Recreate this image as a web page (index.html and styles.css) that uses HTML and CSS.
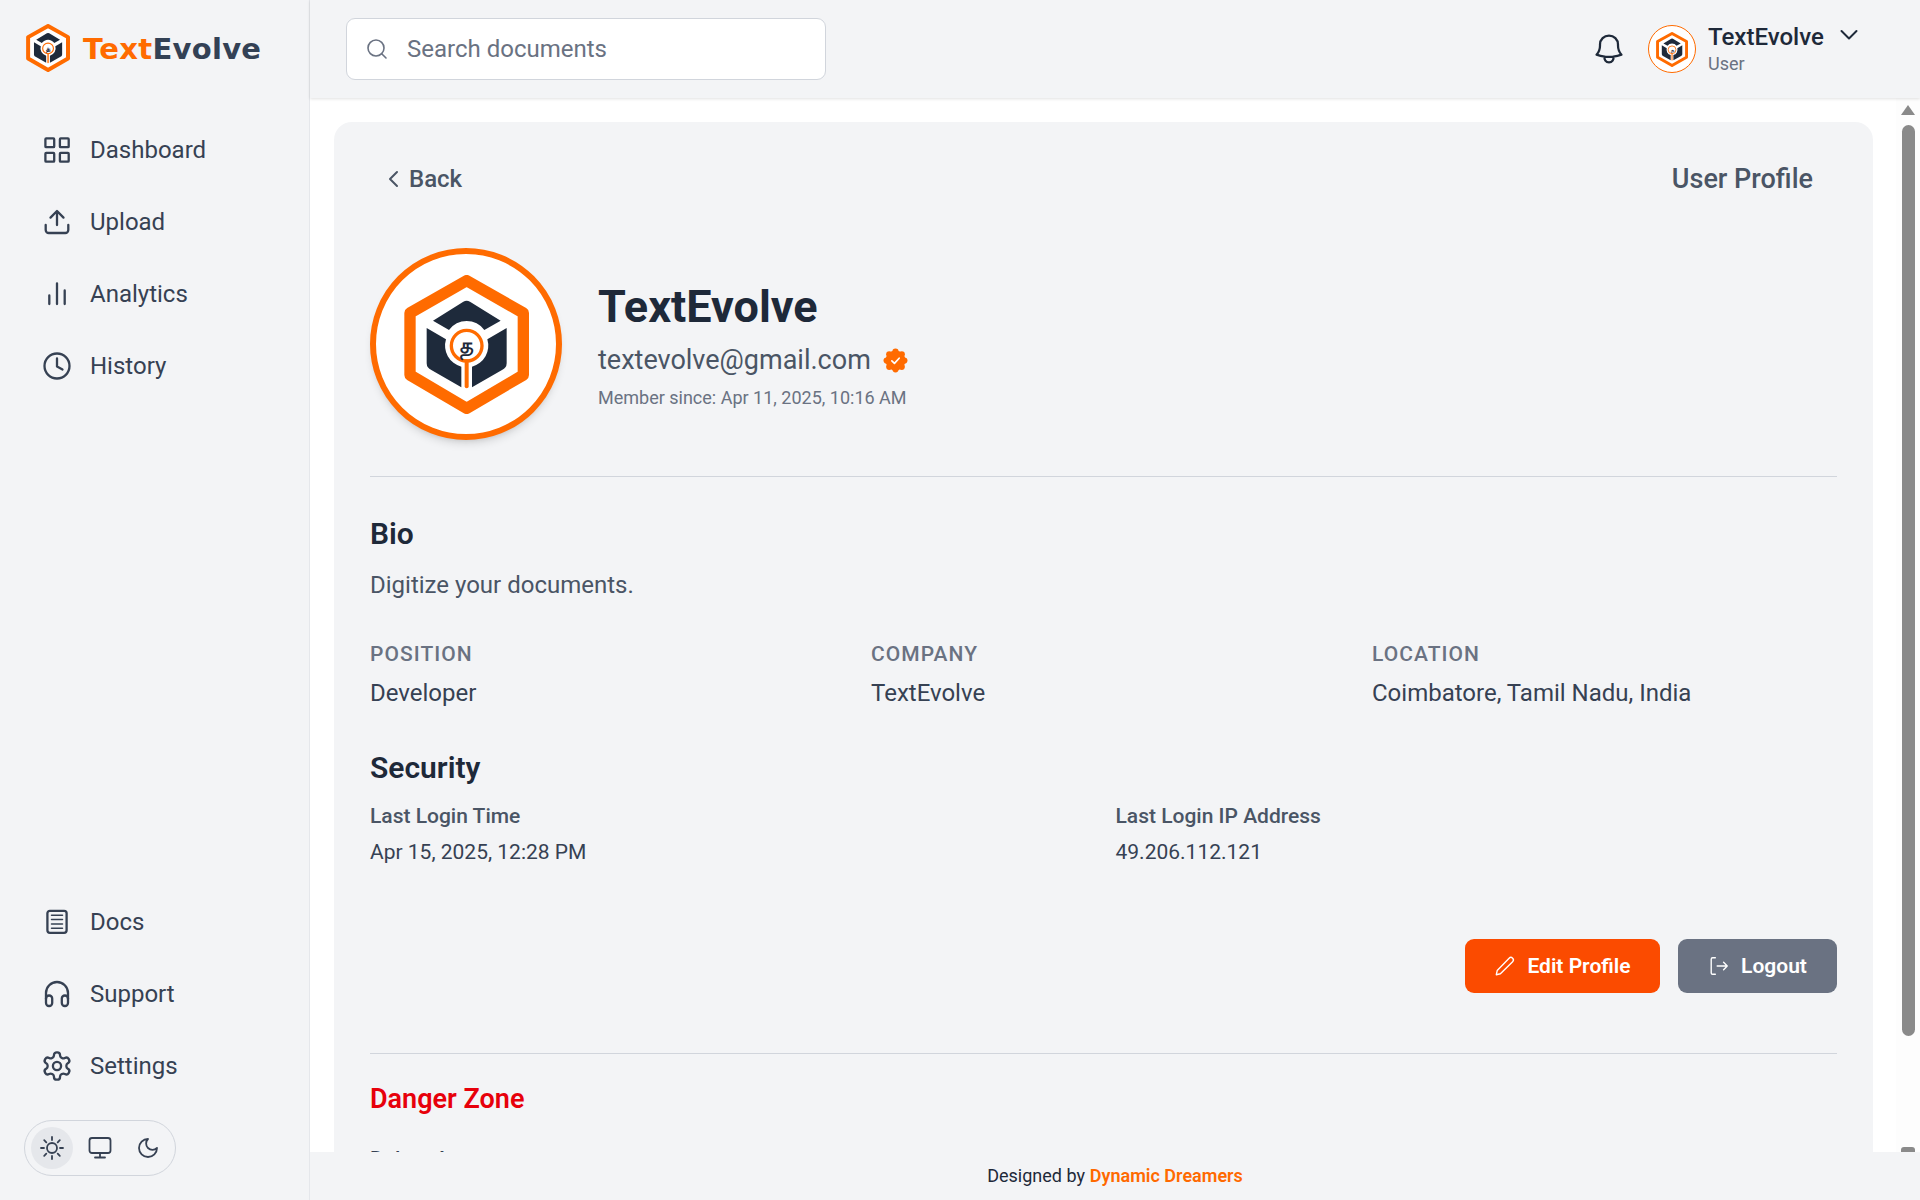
FILE: index.html
```html
<!DOCTYPE html>
<html lang="en">
<head>
<meta charset="utf-8">
<title>TextEvolve - User Profile</title>
<link rel="stylesheet" href="styles.css">
</head>
<body>
<svg class="defs" aria-hidden="true">
  <symbol id="logo" viewBox="130 103 375 417" preserveAspectRatio="none">
    <path d="M318 120 488 217V403L318 503 148 403V217Z" fill="#fff" stroke="#ff6b00" stroke-width="34" stroke-linejoin="round"/>
    <path d="M308 183a20 20 0 0 1 20 0L420 240 371 268a65 65 0 0 0-106 0L217 240Z" fill="#1e2a3b"/>
    <path d="M198 262 256 296a65 65 0 0 0 46 82V440L212 388a22 22 0 0 1-14-20Z" fill="#1e2a3b"/>
    <path d="M438 262 380 296a65 65 0 0 1-46 82V440L424 388a22 22 0 0 0 14-20Z" fill="#1e2a3b"/>
    <circle cx="318" cy="315" r="46" fill="#fff" stroke="#ff6b00" stroke-width="10"/>
    <path d="M318 362V437" stroke="#ff6b00" stroke-width="12" stroke-linecap="round"/>
    <text x="318" y="337" text-anchor="middle" class="logo-glyph">த</text>
  </symbol>
</svg>

<aside class="sidebar">
  <div class="brand">
    <svg class="brand-mark"><use href="#logo"/></svg>
    <span class="brand-name"><span class="brand-orange">Text</span>Evolve</span>
  </div>
  <nav class="nav">
    <a class="nav-item"><svg class="nav-icon" viewBox="0 0 30 30"><rect x="3.4" y="3.4" width="8.8" height="8.8" rx=".8"/><rect x="17.9" y="3.4" width="8.8" height="8.8" rx=".8"/><rect x="3.4" y="17.9" width="8.8" height="8.8" rx=".8"/><rect x="17.9" y="17.9" width="8.8" height="8.8" rx=".8"/></svg>Dashboard</a>
    <a class="nav-item"><svg class="nav-icon" viewBox="0 0 30 30"><path d="M3.7 18v5a3 3 0 0 0 3 3h16.6a3 3 0 0 0 3-3v-5M15 4.5V18M8.5 10.6 15 4l6.500 6.600"/></svg>Upload</a>
    <a class="nav-item"><svg class="nav-icon" viewBox="0 0 30 30"><path d="M7.300 25V16.500M15 25V4.300M22.700 25V11.500"/></svg>Analytics</a>
    <a class="nav-item"><svg class="nav-icon" viewBox="0 0 30 30"><circle cx="15" cy="15" r="12.500"/><path d="M15 7.500v8l5.500 3"/></svg>History</a>
  </nav>
  <nav class="nav nav-bottom">
    <a class="nav-item"><svg class="nav-icon" viewBox="0 0 30 30"><rect x="5.400" y="3.800" width="19.200" height="22" rx="2.500"/><path class="thin" d="M9.500 8.200h11M9.500 12.500h11M9.500 16.900h11M9.500 21.200h11"/></svg>Docs</a>
    <a class="nav-item"><svg class="nav-icon" viewBox="0 0 30 30"><path d="M4 20v-6a11 11 0 0 1 22 0v6"/><rect x="4" y="16.500" width="6.200" height="10.500" rx="3"/><rect x="19.800" y="16.500" width="6.200" height="10.500" rx="3"/></svg>Support</a>
    <a class="nav-item"><svg class="nav-icon nav-icon-gear" viewBox="1 1 22 22"><path d="M12.220 2h-.44a2 2 0 0 0-2 2v.18a2 2 0 0 1-1 1.730l-.43.25a2 2 0 0 1-2 0l-.15-.08a2 2 0 0 0-2.730.73l-.22.38a2 2 0 0 0 .73 2.730l.15.1a2 2 0 0 1 1 1.720v.51a2 2 0 0 1-1 1.740l-.15.09a2 2 0 0 0-.73 2.730l.22.38a2 2 0 0 0 2.730.73l.15-.08a2 2 0 0 1 2 0l.43.25a2 2 0 0 1 1 1.730V20a2 2 0 0 0 2 2h.44a2 2 0 0 0 2-2v-.18a2 2 0 0 1 1-1.730l.43-.25a2 2 0 0 1 2 0l.15.08a2 2 0 0 0 2.730-.73l.22-.39a2 2 0 0 0-.73-2.730l-.15-.08a2 2 0 0 1-1-1.740v-.5a2 2 0 0 1 1-1.740l.15-.09a2 2 0 0 0 .73-2.730l-.22-.38a2 2 0 0 0-2.730-.73l-.15.08a2 2 0 0 1-2 0l-.43-.25a2 2 0 0 1-1-1.730V4a2 2 0 0 0-2-2z"/><circle cx="12" cy="12" r="3"/></svg>Settings</a>
  </nav>
  <div class="theme">
    <span class="theme-btn theme-active"><svg class="theme-icon" viewBox="0 0 24 24"><circle cx="12" cy="12" r="5"/><path d="M12 1v3M12 20v3M1 12h3M20 12h3M4.200 4.200l2.100 2.100M17.700 17.700l2.100 2.100M4.200 19.800l2.100-2.100M17.700 6.300l2.100-2.100"/></svg></span>
    <span class="theme-btn"><svg class="theme-icon" viewBox="0 0 24 24"><rect x="1.500" y="2" width="21" height="15" rx="2.500"/><path d="M12 17v4.500M7 21.500h10"/></svg></span>
    <span class="theme-btn"><svg class="theme-icon" viewBox="0 0 24 24"><path d="M12 3a6 6 0 0 0 9 9 9 9 0 1 1-9-9Z"/></svg></span>
  </div>
</aside>

<header class="topbar">
  <div class="search">
    <svg class="search-icon" viewBox="0 0 24 24"><circle cx="11" cy="11" r="8"/><path d="m21 21-4.300-4.300"/></svg>
    <span class="search-text">Search documents</span>
  </div>
  <div class="account">
    <svg class="bell" viewBox="0 0 24 24"><path d="M14.857 17.082a23.848 23.848 0 0 0 5.454-1.310A8.967 8.967 0 0 1 18 9.750V9A6 6 0 0 0 6 9v.75a8.967 8.967 0 0 1-2.312 6.022c1.733.64 3.560 1.085 5.455 1.310m5.714 0a24.255 24.255 0 0 1-5.714 0m5.714 0a3 3 0 1 1-5.714 0"/></svg>
    <span class="mini-avatar"><svg class="mini-mark"><use href="#logo"/></svg></span>
    <div class="account-text">
      <div class="account-name">TextEvolve</div>
      <div class="account-role">User</div>
    </div>
    <svg class="chevron" viewBox="0 0 24 24"><path d="m4.500 8 7.500 7.500L19.500 8"/></svg>
  </div>
</header>

<main class="main">
  <section class="card">
    <div class="card-top">
      <a class="back"><svg class="back-icon" viewBox="0 0 24 24"><path d="M15 5l-7 7 7 7"/></svg>Back</a>
      <div class="page-title">User Profile</div>
    </div>
    <div class="identity">
      <div class="avatar"><svg class="avatar-mark"><use href="#logo"/></svg></div>
      <div class="identity-text">
        <h1 class="name">TextEvolve</h1>
        <div class="email">textevolve@gmail.com
          <svg class="badge" viewBox="0 0 24 24"><circle cx="12" cy="12" r="9.500"/><circle cx="12" cy="3.500" r="3"/><circle cx="12" cy="20.500" r="3"/><circle cx="3.500" cy="12" r="3"/><circle cx="20.500" cy="12" r="3"/><circle cx="6" cy="6" r="3"/><circle cx="18" cy="6" r="3"/><circle cx="6" cy="18" r="3"/><circle cx="18" cy="18" r="3"/><path class="badge-check" d="m8.500 12.300 2.500 2.500 4.500-5"/></svg>
        </div>
        <div class="since">Member since: Apr 11, 2025, 10:16 AM</div>
      </div>
    </div>
    <h2 class="section-title bio-title">Bio</h2>
    <p class="bio">Digitize your documents.</p>
    <div class="facts">
      <div><div class="fact-label">POSITION</div><div class="fact-value">Developer</div></div>
      <div><div class="fact-label">COMPANY</div><div class="fact-value">TextEvolve</div></div>
      <div><div class="fact-label">LOCATION</div><div class="fact-value">Coimbatore, Tamil Nadu, India</div></div>
    </div>
    <h2 class="section-title security-title">Security</h2>
    <div class="security">
      <div><div class="sec-label">Last Login Time</div><div class="sec-value">Apr 15, 2025, 12:28 PM</div></div>
      <div><div class="sec-label">Last Login IP Address</div><div class="sec-value">49.206.112.121</div></div>
    </div>
    <div class="actions">
      <button class="btn btn-edit"><svg class="btn-icon" viewBox="0 0 24 24"><path d="M16.500 3.500a2.300 2.300 0 0 1 3.800 3.800L7 20.500l-4.500 1 1-4.500Z"/></svg>Edit Profile</button>
      <button class="btn btn-logout"><svg class="btn-icon" viewBox="0 0 24 24"><path d="M8 3H5a1.500 1.500 0 0 0-1.500 1.500v15A1.500 1.500 0 0 0 5 21h3M10 12h11M17 8l4 4-4 4"/></svg>Logout</button>
    </div>
    <div class="danger">
      <h2 class="danger-title">Danger Zone</h2>
      <div class="danger-label">Delete Account</div>
    </div>
  </section>
  <div class="scrollbar" aria-hidden="true">
    <span class="scroll-up"></span>
    <span class="scroll-thumb"></span>
    <span class="scroll-down"></span>
  </div>
</main>

<footer class="footer">Designed by <span class="footer-link">Dynamic Dreamers</span></footer>
</body>
</html>
```

FILE: styles.css
```css
* { box-sizing: border-box; }
html, body { height: 100%; }
body {
  margin: 0;
  display: grid;
  grid-template-columns: 310px 1fr;
  grid-template-rows: 98px 1054px 48px;
  height: 1200px;
  overflow: hidden;
  background: #fff;
  font-family: Roboto, "Noto Sans", sans-serif;
  color: #1e2939;
}
.defs { position: absolute; width: 0; height: 0; }
.logo-glyph { font: 700 62px "Noto Sans", "DejaVu Sans", sans-serif; fill: #1e2a3b; }

.sidebar {
  grid-row: 1 / 4;
  display: flex;
  flex-direction: column;
  background: #f3f4f6;
  border-right: 1px solid #e5e7eb;
  padding-bottom: 24px;
}
.brand { display: flex; align-items: center; height: 96px; padding-left: 26px; gap: 13px; margin-bottom: 18px; }
.brand-mark { width: 44px; height: 48px; }
.brand-name { font: 700 29px/1 "DejaVu Sans", sans-serif; color: #334155; letter-spacing: 0.300px; padding-top: 2px; }
.brand-orange { color: #ff6b00; }
.nav { display: flex; flex-direction: column; }
.nav-bottom { margin-top: auto; margin-bottom: 18px; }
.nav-item { display: flex; align-items: center; height: 72px; padding-left: 42px; gap: 18px; font-size: 24px; color: #364153; }
.nav-icon { width: 30px; height: 30px; fill: none; stroke: #364153; stroke-width: 2.300; stroke-linecap: round; stroke-linejoin: round; flex: none; }
.nav-icon-gear { stroke-width: 1.700; }
.nav-icon .thin { stroke-width: 1.500; }
.theme {
  display: flex;
  align-items: center;
  align-self: flex-start;
  margin-left: 24px;
  height: 56px;
  width: 152px;
  padding: 0 6px;
  gap: 6px;
  border: 1px solid #d1d5dc;
  border-radius: 28px;
}
.theme-btn { display: flex; align-items: center; justify-content: center; width: 42px; height: 42px; border-radius: 50%; }
.theme-active { background: #e5e7eb; }
.theme-icon { width: 24px; height: 24px; fill: none; stroke: #364153; stroke-width: 1.800; stroke-linecap: round; stroke-linejoin: round; }

.topbar {
  display: flex;
  align-items: center;
  justify-content: space-between;
  background: #f3f4f6;
  padding: 0 59px 0 36px;
  height: 98px;
  box-shadow: 0 1px 3px rgba(0,0,0,.12);
  position: relative;
  z-index: 2;
}
.search {
  display: flex;
  align-items: center;
  gap: 18px;
  width: 480px;
  height: 62px;
  padding-left: 18px;
  background: #fff;
  border: 1px solid #d1d5dc;
  border-radius: 9px;
}
.search-icon { width: 24px; height: 24px; fill: none; stroke: #6a7282; stroke-width: 1.600; stroke-linecap: round; stroke-linejoin: round; }
.search-text { font-size: 24px; color: #6a7282; }
.account { display: flex; align-items: center; }
.bell { width: 36px; height: 36px; fill: none; stroke: #1e2939; stroke-width: 1.500; stroke-linecap: round; stroke-linejoin: round; margin-right: 21px; }
.mini-avatar { display: flex; align-items: center; justify-content: center; width: 48px; height: 48px; border: 1.500px solid #ff6b00; border-radius: 50%; background: #fff; margin-right: 12px; }
.mini-mark { width: 32px; height: 35px; }
.account-text { width: 129px; }
.account-name { font-size: 24px; line-height: 30px; font-weight: 500; color: #1e2939; }
.account-role { font-size: 18px; line-height: 24px; color: #6a7282; }
.chevron { width: 24px; height: 24px; fill: none; stroke: #1e2939; stroke-width: 2; stroke-linecap: round; stroke-linejoin: round; align-self: flex-start; margin-top: 1px; }

.main { position: relative; overflow: hidden; padding: 24px 47px 0 24px; background: #fff; }
.card { background: #f3f4f6; border-radius: 18px 18px 0 0; padding: 37px 36px 36px; height: 1300px; }
.card-top { display: flex; align-items: center; justify-content: space-between; height: 40px; margin-bottom: 49px; padding-right: 24px; }
.back { display: flex; align-items: center; padding-left: 12px; gap: 3px; font-size: 24px; font-weight: 500; color: #4a5565; }
.back-icon { width: 24px; height: 24px; fill: none; stroke: #4a5565; stroke-width: 2; stroke-linecap: round; stroke-linejoin: round; }
.page-title { font-size: 27px; font-weight: 500; color: #4a5565; }
.identity { display: flex; align-items: center; gap: 36px; padding-bottom: 36px; border-bottom: 1px solid #d1d5dc; }
.avatar {
  display: flex; align-items: center; justify-content: center;
  width: 192px; height: 192px; flex: none;
  background: #fff; border: 6px solid #ff6b00; border-radius: 50%;
  box-shadow: 0 6px 10px -3px rgba(0,0,0,.14), 0 3px 5px -3px rgba(0,0,0,.1);
}
.avatar-mark { width: 125px; height: 139px; }
.identity-text { padding-top: 3px; }
.name { margin: 0; font-size: 45px; line-height: 54px; font-weight: 700; color: #1e2939; }
.email { display: flex; align-items: center; gap: 12px; margin-top: 6px; font-size: 27px; line-height: 40px; color: #4a5565; }
.badge { width: 25px; height: 25px; fill: #ff6b00; margin-top: 2px; }
.badge-check { fill: none; stroke: #fff; stroke-width: 1.600; stroke-linecap: round; stroke-linejoin: round; }
.since { margin-top: 4px; font-size: 18px; line-height: 28px; color: #6a7282; }
.section-title { margin: 0; font-size: 30px; line-height: 45px; font-weight: 600; color: #1e2939; }
.bio-title { margin-top: 34px; }
.bio { margin: 11px 0 0; font-size: 24px; line-height: 36px; color: #4a5565; }
.facts { display: grid; grid-template-columns: repeat(3, 1fr); gap: 36px; margin-top: 35px; }
.fact-label { font-size: 21px; line-height: 32px; font-weight: 500; letter-spacing: 1.050px; color: #6a7282; }
.fact-value { margin-top: 5px; font-size: 24px; line-height: 36px; color: #364153; }
.security-title { margin-top: 34px; }
.security { display: grid; grid-template-columns: 1fr 1fr; gap: 24px; margin-top: 10px; }
.sec-label { font-size: 21px; line-height: 32px; font-weight: 500; color: #4a5565; }
.sec-value { margin-top: 4px; font-size: 21px; line-height: 32px; color: #364153; }
.actions { display: flex; justify-content: flex-end; gap: 18px; margin-top: 71px; }
.btn { display: flex; align-items: center; justify-content: center; gap: 11px; height: 54px; border: 0; border-radius: 9px; font: 600 21px Roboto, sans-serif; color: #fff; }
.btn-edit { width: 195px; background: #fb4b00; }
.btn-logout { width: 159px; background: #6a7282; }
.btn-icon { width: 22px; height: 22px; fill: none; stroke: #fff; stroke-width: 1.500; stroke-linecap: round; stroke-linejoin: round; }
.danger { margin-top: 60px; border-top: 1px solid #d1d5dc; padding-top: 23px; }
.danger-title { margin: 0; font-size: 27px; line-height: 45px; font-weight: 600; color: #e7000b; }
.danger-label { margin-top: 21px; font-size: 21px; line-height: 32px; font-weight: 500; color: #364153; }

.scrollbar { position: absolute; top: 0; right: 0; bottom: 0; width: 24px; background: #fdfdfd; }
.scroll-up, .scroll-down, .scroll-thumb { position: absolute; }
.scroll-up { top: 7px; left: 5px; border: 7px solid transparent; border-top: 0; border-bottom: 10px solid #8a8a8a; }
.scroll-thumb { top: 27px; left: 6px; width: 13px; height: 911px; border-radius: 7px; background: #8a8a8a; }
.scroll-down { bottom: 0; left: 5px; width: 14px; height: 5px; border-radius: 3px 3px 0 0; background: #8a8a8a; }

.footer {
  grid-column: 2;
  display: flex; align-items: center; justify-content: center; gap: .27em;
  background: #f3f4f6;
  font-size: 18px;
  padding-bottom: 2px;
  color: #1e2939;
}
.footer-link { font-weight: 600; color: #ff6900; }
```
